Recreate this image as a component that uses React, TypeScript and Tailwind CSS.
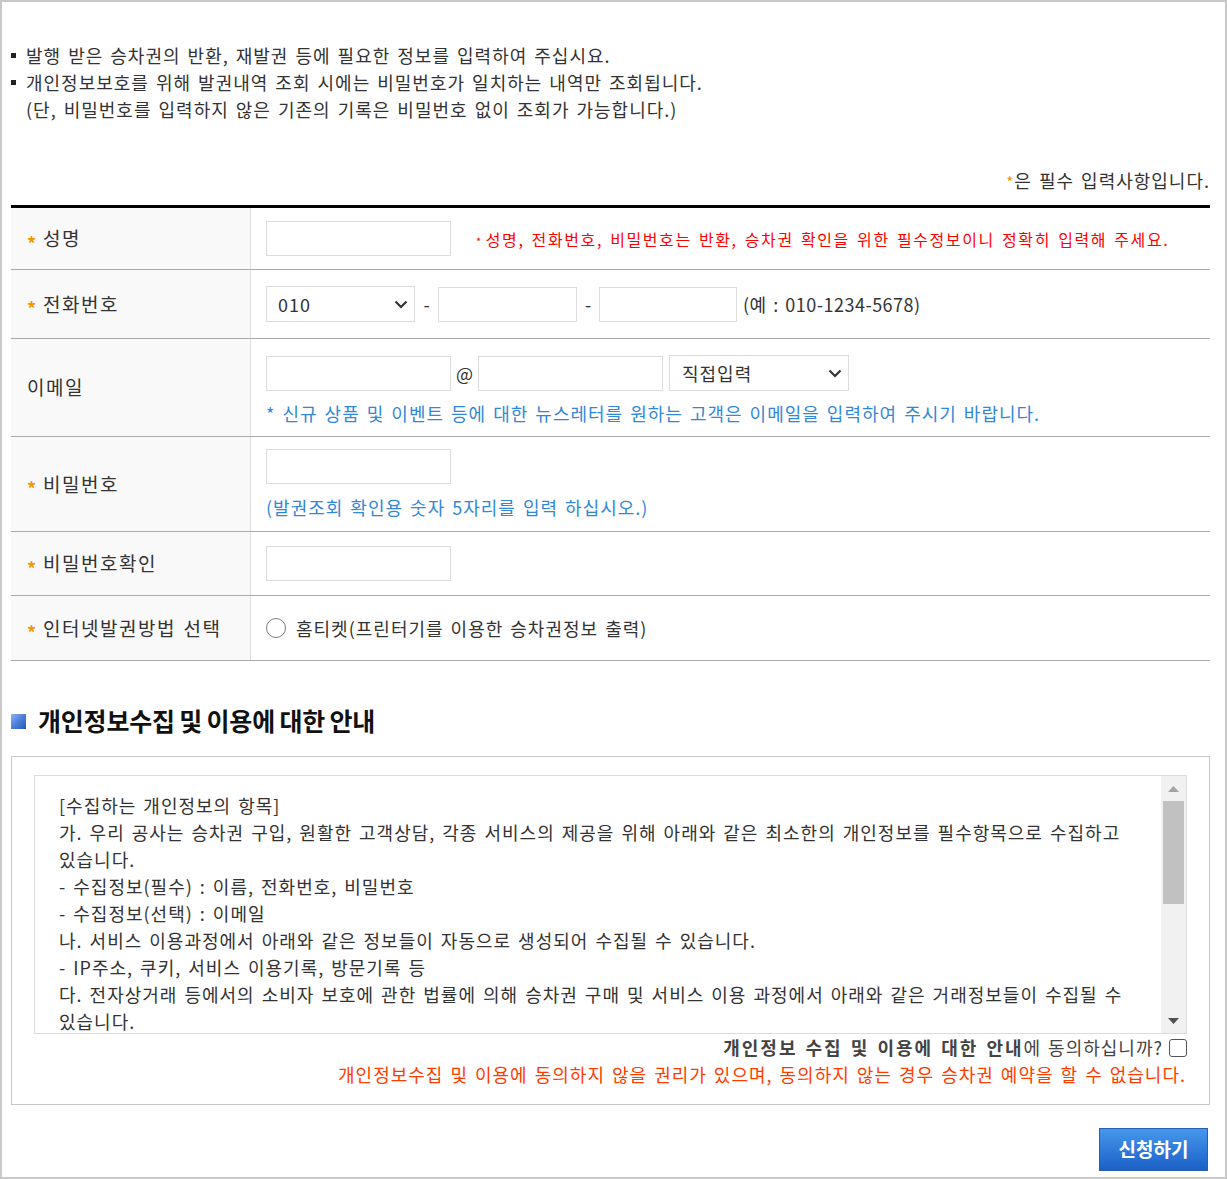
import React from "react";

const Star = () => (
  <span className="inline-block w-[16px] text-[18px] font-bold leading-none text-[#f39800] translate-y-[4px] tracking-normal">*</span>
);

const Chevron = () => (
  <svg width="14" height="9" viewBox="0 0 14 9" className="shrink-0">
    <path d="M1.5 1.5 L7 7 L12.5 1.5" fill="none" stroke="#333" strokeWidth="2.2" />
  </svg>
);

const Input = ({ w }: { w: string }) => (
  <div className={`${w} h-[35px] border border-[#dcdcdc] bg-white shrink-0`} />
);

const Label = ({ star = true, children }: { star?: boolean; children: React.ReactNode }) => (
  <div className="w-[240px] shrink-0 self-stretch bg-[#f9f9f9] border-r border-[#dcdcdc] flex items-center pl-[16px] text-[19px] text-[#333] tracking-[1.5px]">
    {star && <Star />}
    <span>{children}</span>
  </div>
);

const policyLines = [
  "[수집하는 개인정보의 항목]",
  "가. 우리 공사는 승차권 구입, 원활한 고객상담, 각종 서비스의 제공을 위해 아래와 같은 최소한의 개인정보를 필수항목으로 수집하고",
  "있습니다.",
  "- 수집정보(필수) : 이름, 전화번호, 비밀번호",
  "- 수집정보(선택) : 이메일",
  "나. 서비스 이용과정에서 아래와 같은 정보들이 자동으로 생성되어 수집될 수 있습니다.",
  "- IP주소, 쿠키, 서비스 이용기록, 방문기록 등",
  "다. 전자상거래 등에서의 소비자 보호에 관한 법률에 의해 승차권 구매 및 서비스 이용 과정에서 아래와 같은 거래정보들이 수집될 수",
  "있습니다.",
];

export default function App() {
  return (
    <div className="w-[1227px] h-[1179px] border-2 border-[#c8c8c8] bg-white font-['Noto_Sans_CJK_KR',sans-serif] text-[#333] tracking-[1px] [word-spacing:2px] overflow-hidden">
      <div className="pl-[9px] pr-[15px] pt-[40px]">
        {/* Intro */}
        <div className="text-[18px] leading-[27px] text-[#333]">
          <div className="flex items-center">
            <span className="w-[5px] h-[5px] bg-[#222] mr-[10px] shrink-0" />
            <span>발행 받은 승차권의 반환, 재발권 등에 필요한 정보를 입력하여 주십시요.</span>
          </div>
          <div className="flex items-center">
            <span className="w-[5px] h-[5px] bg-[#222] mr-[10px] shrink-0" />
            <span>개인정보보호를 위해 발권내역 조회 시에는 비밀번호가 일치하는 내역만 조회됩니다.</span>
          </div>
          <div className="pl-[15px]">(단, 비밀번호를 입력하지 않은 기존의 기록은 비밀번호 없이 조회가 가능합니다.)</div>
        </div>

        <div className="mt-[44px] text-right text-[18px] leading-[27px]">
          <span className="text-[#f39800] text-[15px]">*</span>은 필수 입력사항입니다.
        </div>

        {/* Form table */}
        <div className="mt-[10px] border-t-[3px] border-black">
          {/* 성명 */}
          <div className="flex h-[62px] border-b border-[#a9a9a9]">
            <Label>성명</Label>
            <div className="flex items-center pl-[15px]">
              <Input w="w-[185px]" />
              <span className="ml-[25px] text-[16px] text-[#ff0000] tracking-[1.6px]">
                <span className="text-[11px] align-middle mr-[3px]">*</span>성명, 전화번호, 비밀번호는 반환, 승차권 확인을 위한 필수정보이니 정확히 입력해 주세요.
              </span>
            </div>
          </div>

          {/* 전화번호 */}
          <div className="flex h-[69px] border-b border-[#a9a9a9]">
            <Label>전화번호</Label>
            <div className="flex items-center pl-[15px] text-[18px]">
              <div className="w-[149px] h-[36px] border border-[#dcdcdc] bg-white flex items-center justify-between pl-[11px] pr-[6px]">
                <span>010</span>
                <Chevron />
              </div>
              <span className="w-[23px] text-center tracking-normal">-</span>
              <Input w="w-[139px]" />
              <span className="w-[22px] text-center tracking-normal">-</span>
              <Input w="w-[138px]" />
              <span className="ml-[6px] tracking-[0.5px]">(예 : 010-1234-5678)</span>
            </div>
          </div>

          {/* 이메일 */}
          <div className="flex h-[98px] border-b border-[#a9a9a9]">
            <Label star={false}>이메일</Label>
            <div className="flex flex-col pl-[15px] pt-[16px] text-[18px]">
              <div className="flex items-center h-[36px]">
                <Input w="w-[185px]" />
                <span className="w-[27px] text-center text-[18px] tracking-normal">@</span>
                <Input w="w-[185px]" />
                <div className="ml-[6px] w-[180px] h-[36px] border border-[#dcdcdc] bg-white flex items-center justify-between pl-[12px] pr-[6px]">
                  <span>직접입력</span>
                  <Chevron />
                </div>
              </div>
              <div className="mt-[9px] leading-[27px] text-[#3189d6]">
                * 신규 상품 및 이벤트 등에 대한 뉴스레터를 원하는 고객은 이메일을 입력하여 주시기 바랍니다.
              </div>
            </div>
          </div>

          {/* 비밀번호 */}
          <div className="flex h-[95px] border-b border-[#a9a9a9]">
            <Label>비밀번호</Label>
            <div className="flex flex-col pl-[15px] pt-[12px] text-[18px]">
              <Input w="w-[185px]" />
              <div className="mt-[10px] leading-[27px] text-[#3189d6]">
                (발권조회 확인용 숫자 5자리를 입력 하십시오.)
              </div>
            </div>
          </div>

          {/* 비밀번호확인 */}
          <div className="flex h-[64px] border-b border-[#a9a9a9]">
            <Label>비밀번호확인</Label>
            <div className="flex items-center pl-[15px]">
              <Input w="w-[185px]" />
            </div>
          </div>

          {/* 인터넷발권방법 선택 */}
          <div className="flex h-[65px] border-b border-[#a9a9a9]">
            <Label>인터넷발권방법 선택</Label>
            <div className="flex items-center pl-[15px] text-[18px]">
              <span className="w-[20px] h-[20px] rounded-full border-[1.5px] border-[#7a7a7a] bg-white shrink-0" />
              <span className="ml-[10px]">홈티켓(프린터기를 이용한 승차권정보 출력)</span>
            </div>
          </div>
        </div>

        {/* Heading */}
        <div className="mt-[42px] flex items-center h-[36px]">
          <span className="w-[15px] h-[15px] bg-gradient-to-br from-[#8fb4f0] via-[#4b7fdb] to-[#2a56bb] shrink-0" />
          <span className="ml-[12px] text-[25px] font-bold tracking-[-0.2px] text-[#111] [word-spacing:-1px]">
            개인정보수집 및 이용에 대한 안내
          </span>
        </div>

        {/* Agreement box */}
        <div className="mt-[17px] border border-[#c8c8c8] pt-[18px] pl-[22px] pr-[22px] pb-[16px]">
          <div className="h-[259px] border border-[#dcdcdc] flex">
            <div className="flex-1 overflow-hidden pl-[24px] pt-[16px] text-[18px] leading-[27px] text-[#333]">
              {policyLines.map((l, i) => (
                <div key={i} className="whitespace-nowrap">
                  {l}
                </div>
              ))}
            </div>
            <div className="w-[25px] bg-[#f1f1f1] flex flex-col shrink-0">
              <div className="h-[25px] flex items-center justify-center">
                <svg width="11" height="6" viewBox="0 0 11 6">
                  <path d="M0 6 L5.5 0 L11 6 Z" fill="#a3a3a3" />
                </svg>
              </div>
              <div className="mx-[2px] h-[103px] bg-[#c1c1c1]" />
              <div className="flex-1" />
              <div className="h-[25px] flex items-center justify-center">
                <svg width="11" height="6" viewBox="0 0 11 6">
                  <path d="M0 0 L11 0 L5.5 6 Z" fill="#505050" />
                </svg>
              </div>
            </div>
          </div>
          <div className="flex items-center justify-end text-[18px] leading-[27px]">
            <span className="font-bold text-[#444] tracking-[2px]">개인정보 수집 및 이용에 대한 안내</span>
            <span className="text-[#444]">에 동의하십니까?</span>
            <span className="ml-[6px] w-[18px] h-[18px] rounded-[3px] border border-[#555] bg-white" />
          </div>
          <div className="text-right text-[18px] leading-[27px] text-[#ff3c00] pr-[1px]">
            개인정보수집 및 이용에 동의하지 않을 권리가 있으며, 동의하지 않는 경우 승차권 예약을 할 수 없습니다.
          </div>
        </div>

        {/* Submit */}
        <div className="mt-[23px] flex justify-end pr-[2px]">
          <button className="w-[109px] h-[43px] bg-gradient-to-b from-[#4597ec] to-[#1d60c6] border border-[#2a5fae] text-white text-[19px] font-bold tracking-normal [word-spacing:0px]">
            신청하기
          </button>
        </div>
      </div>
    </div>
  );
}
